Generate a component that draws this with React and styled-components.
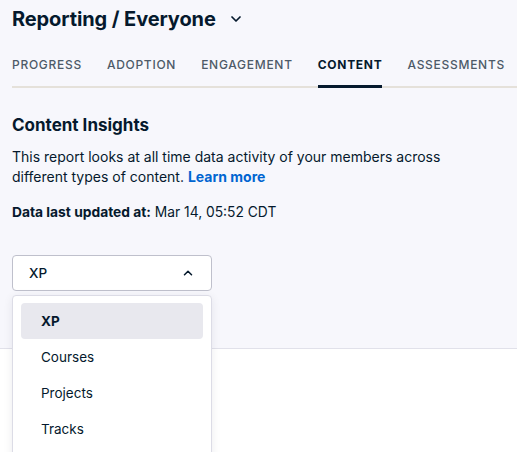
import React from 'react';
import styled, { createGlobalStyle } from 'styled-components';

const GlobalStyle = createGlobalStyle`
  html, body {
    margin: 0;
    padding: 0;
    background: #f7f7fc;
    font-family: Inter, "Noto Sans", sans-serif;
    color: #05192d;
  }
`;

const Page = styled.div`
  width: 517px;
  height: 452px;
  overflow: hidden;
  display: flex;
  flex-direction: column;
  background: #f7f7fc;
`;

const Header = styled.header`
  padding: 0 0 0 12px;
`;

const TitleRow = styled.div`
  display: flex;
  align-items: center;
  gap: 12px;
  height: 37px;
`;

const Title = styled.h1`
  margin: 0;
  font-size: 20px;
  font-weight: 700;
  letter-spacing: -0.1px;
`;

const Tabs = styled.nav`
  display: flex;
  gap: 25px;
  margin-top: 10px;
  border-bottom: 2px solid #e5e1da;
`;

const Tab = styled.div`
  position: relative;
  padding: 10px 0 14px;
  font-size: 12px;
  line-height: 15px;
  letter-spacing: 0.72px;
  text-transform: uppercase;
  font-weight: ${p => (p.$active ? 700 : 500)};
  color: ${p => (p.$active ? '#05192d' : '#4d5a68')};
  white-space: nowrap;
  &::after {
    content: '';
    display: ${p => (p.$active ? 'block' : 'none')};
    position: absolute;
    left: 0;
    right: 0;
    bottom: -2px;
    height: 3px;
    background: #05192d;
  }
`;

const Section = styled.section`
  padding: 26px 12px 0;
`;

const Heading = styled.h2`
  margin: 0 0 11px;
  font-size: 17px;
  line-height: 22px;
  font-weight: 700;
`;

const Text = styled.p`
  margin: 0;
  font-size: 14px;
  line-height: 19.5px;
  max-width: 460px;
`;

const Link = styled.a`
  color: #0065d1;
  font-weight: 700;
  text-decoration: none;
`;

const Updated = styled.p`
  margin: 18px 0 0;
  font-size: 13.8px;
  line-height: 17px;
  strong {
    font-weight: 700;
  }
`;

const SelectWrap = styled.div`
  position: relative;
  width: 200px;
  margin-top: 34px;
`;

const SelectBox = styled.div`
  box-sizing: border-box;
  height: 36px;
  display: flex;
  align-items: center;
  justify-content: space-between;
  padding: 0 16px;
  background: #fff;
  border: 1px solid #bfc0cc;
  border-radius: 4px;
  font-size: 13.5px;
  font-weight: 500;
`;

const Menu = styled.ul`
  position: absolute;
  z-index: 2;
  top: 40px;
  left: 0;
  right: 0;
  box-sizing: border-box;
  margin: 0;
  padding: 7px 8px;
  list-style: none;
  background: #fff;
  border: 1px solid #dcdce6;
  border-radius: 4px;
  height: 200px;
  box-shadow: 0 2px 10px rgba(5, 25, 45, 0.08);
`;

const Item = styled.li`
  height: 36px;
  display: flex;
  align-items: center;
  padding: 0 20px;
  border-radius: 4px;
  font-size: 13.5px;
  font-weight: ${p => (p.$selected ? 700 : 400)};
  background: ${p => (p.$selected ? '#e8e8ee' : 'transparent')};
`;

const Card = styled.div`
  flex: 1;
  margin-top: 57px;
  background: #fff;
  border-top: 1px solid #e1e1ea;
`;

const Chevron = ({ up, size = 14 }) => (
  <svg width={size} height={size} viewBox="0 0 24 24" fill="none" stroke="#05192d" strokeWidth="2.6" strokeLinecap="round" strokeLinejoin="round">
    <path d={up ? 'M6 15l6-6 6 6' : 'M6 9l6 6 6-6'} />
  </svg>
);

const tabs = ['Progress', 'Adoption', 'Engagement', 'Content', 'Assessments'];
const options = ['XP', 'Courses', 'Projects', 'Tracks'];

export default function App() {
  return (
    <Page>
      <GlobalStyle />
      <Header>
        <TitleRow>
          <Title>Reporting / Everyone</Title>
          <Chevron size={16} />
        </TitleRow>
        <Tabs>
          {tabs.map(t => (
            <Tab key={t} $active={t === 'Content'}>{t}</Tab>
          ))}
        </Tabs>
      </Header>
      <Section>
        <Heading>Content Insights</Heading>
        <Text>
          This report looks at all time data activity of your members across different types of content.{' '}
          <Link href="#">Learn more</Link>
        </Text>
        <Updated>
          <strong>Data last updated at:</strong> Mar 14, 05:52 CDT
        </Updated>
        <SelectWrap>
          <SelectBox>
            XP
            <Chevron up />
          </SelectBox>
          <Menu>
            {options.map(o => (
              <Item key={o} $selected={o === 'XP'}>{o}</Item>
            ))}
          </Menu>
        </SelectWrap>
      </Section>
      <Card />
    </Page>
  );
}
